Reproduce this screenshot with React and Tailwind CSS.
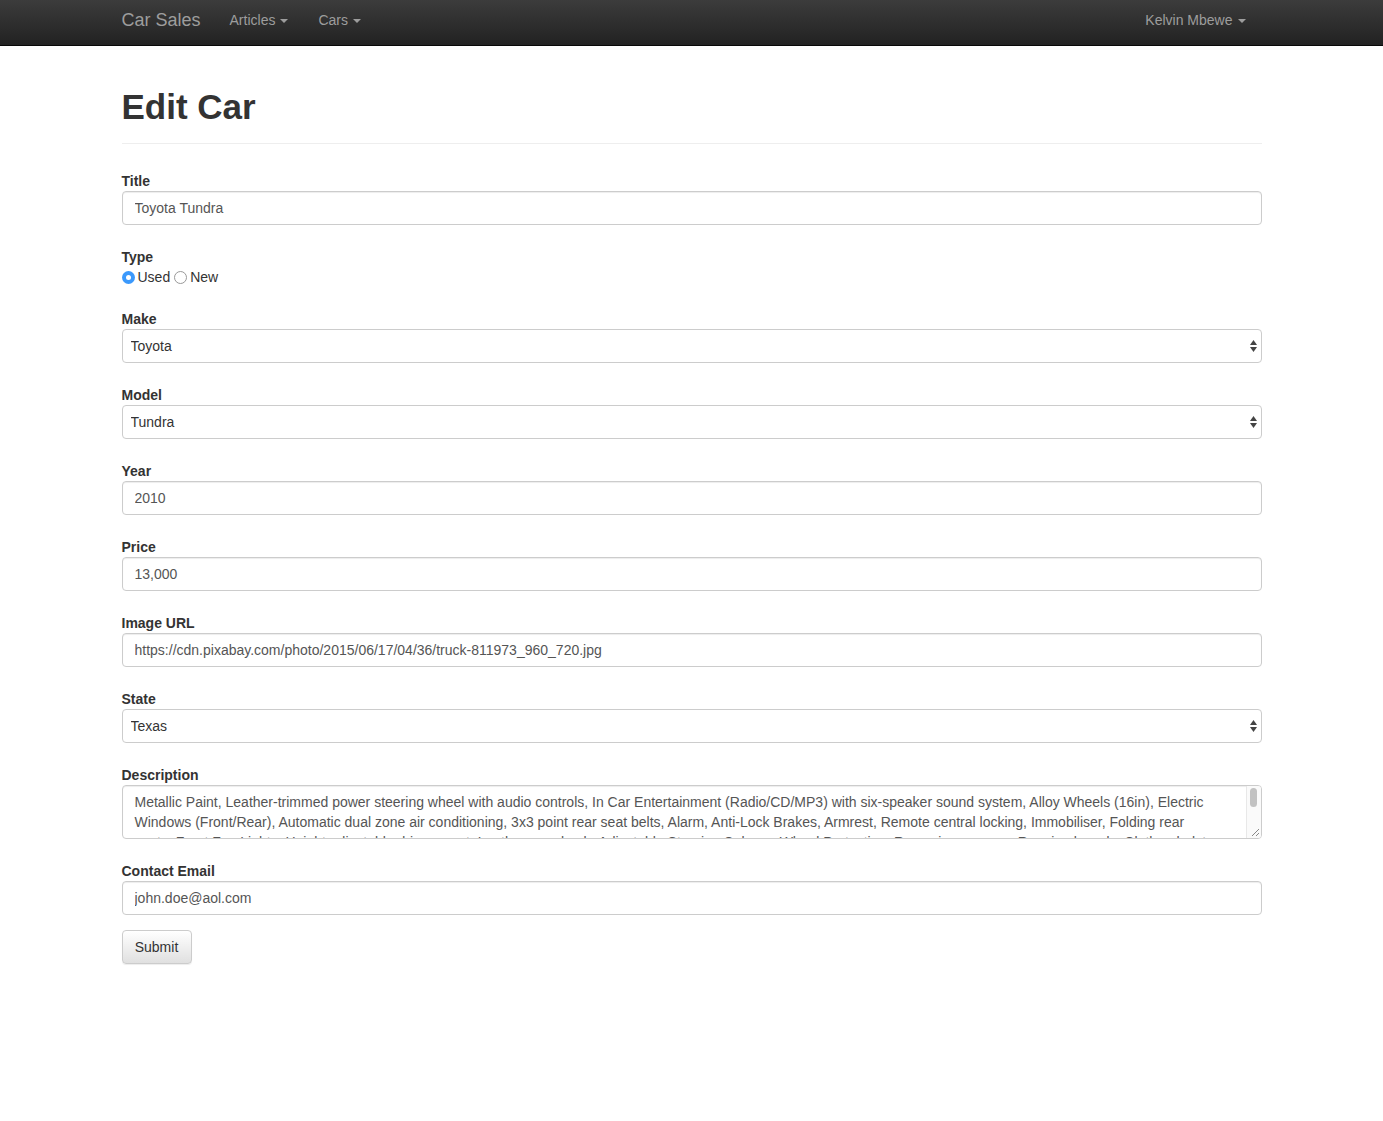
import React from "react";

const font = { fontFamily: '"Liberation Sans", Arial, sans-serif' };

/**
 * Caret - 下拉小三角
 */
function Caret() {
  return (
    <span className="ml-[5px] inline-block h-0 w-0 border-l-[4px] border-r-[4px] border-t-[4px] border-l-transparent border-r-transparent border-t-[#9d9d9d] align-middle"></span>
  );
}

function Navbar() {
  return (
    <div className="h-[46px] border-b border-[#080808] bg-gradient-to-b from-[#3c3c3c] to-[#222222]">
      <div className="mx-auto flex w-[1140px] items-start justify-between pt-[9px]">
        <div className="flex items-center">
          <span className="text-[18px] leading-[22px] text-[#9d9d9d]">Car Sales</span>
          <span className="ml-[29px] text-[14px] leading-[22px] text-[#9d9d9d]">
            Articles
            <Caret />
          </span>
          <span className="ml-[30px] text-[14px] leading-[22px] text-[#9d9d9d]">
            Cars
            <Caret />
          </span>
        </div>
        <span className="mr-[16px] text-[14px] leading-[22px] text-[#9d9d9d]">
          Kelvin Mbewe
          <Caret />
        </span>
      </div>
    </div>
  );
}

function Label({ children }) {
  return <label className="block text-[14px] font-bold leading-[20px] text-[#333]">{children}</label>;
}

function TextInput({ value }) {
  return (
    <input
      readOnly
      value={value}
      className="block h-[34px] w-full rounded-[4px] border border-[#ccc] bg-white px-3 text-[14px] text-[#555] shadow-[inset_0_1px_1px_rgba(0,0,0,0.075)] outline-none"
      style={font}
    />
  );
}

function SelectInput({ value }) {
  return (
    <div className="relative">
      <select
        value={value}
        onChange={() => {}}
        className="block h-[34px] w-full appearance-none rounded-[4px] border border-[#ccc] bg-white pl-[8px] text-[14px] text-[#333] outline-none"
        style={font}
      >
        <option>{value}</option>
      </select>
      {/* up/down arrows */}
      <svg className="pointer-events-none absolute right-[5px] top-[11px]" width="7" height="12" viewBox="0 0 7 12">
        <path d="M3.5 0 L7 5 L0 5 Z" fill="#444" />
        <path d="M3.5 12 L7 7 L0 7 Z" fill="#444" />
      </svg>
    </div>
  );
}

function Group({ label, children, mb = "mb-[22px]" }) {
  return (
    <div className={mb}>
      <Label>{label}</Label>
      {children}
    </div>
  );
}

export default function App() {
  return (
    <div className="min-h-[1121px] bg-white" style={font}>
      <Navbar />
      <div className="mx-auto w-[1140px] pt-[41px]">
        {/* Page Header */}
        <h1 className="border-b border-[#eee] pb-[16px] text-[35px] font-bold leading-[40px] text-[#333]">Edit Car</h1>

        <form className="mt-[27px]">
          <Group label="Title">
            <TextInput value="Toyota Tundra" />
          </Group>

          <Group label="Type">
            <div className="flex h-[20px] items-center text-[14px] text-[#333]">
              <span className="flex h-[13px] w-[13px] items-center justify-center rounded-full bg-[#3b99fc]">
                <span className="h-[5px] w-[5px] rounded-full bg-white"></span>
              </span>
              <span className="ml-[3px]">Used</span>
              <span className="ml-[4px] h-[13px] w-[13px] rounded-full border border-[#999] bg-white"></span>
              <span className="ml-[3px]">New</span>
            </div>
          </Group>

          <Group label="Make">
            <SelectInput value="Toyota" />
          </Group>

          <Group label="Model">
            <SelectInput value="Tundra" />
          </Group>

          <Group label="Year">
            <TextInput value="2010" />
          </Group>

          <Group label="Price">
            <TextInput value="13,000" />
          </Group>

          <Group label="Image URL">
            <TextInput value="https://cdn.pixabay.com/photo/2015/06/17/04/36/truck-811973_960_720.jpg" />
          </Group>

          <Group label="State">
            <SelectInput value="Texas" />
          </Group>

          <Group label="Description">
            <div className="relative h-[54px] overflow-hidden rounded-[4px] border border-[#ccc] bg-white px-3 pt-[6px] text-[14px] leading-[20px] text-[#555] shadow-[inset_0_1px_1px_rgba(0,0,0,0.075)]">
              <div className="whitespace-nowrap">
                Metallic Paint, Leather-trimmed power steering wheel with audio controls, In Car Entertainment (Radio/CD/MP3) with six-speaker sound system, Alloy Wheels (16in), Electric
              </div>
              <div className="whitespace-nowrap">
                Windows (Front/Rear), Automatic dual zone air conditioning, 3x3 point rear seat belts, Alarm, Anti-Lock Brakes, Armrest, Remote central locking, Immobiliser, Folding rear
              </div>
              <div className="whitespace-nowrap">
                seats, Front Fog Lights, Height adjustable drivers seat, Leather gear knob, Adjustable Steering Column, Wheel Protection, Reversing sensors, Running boards, Cloth upholstery
              </div>
              {/* scrollbar */}
              <div className="absolute right-0 top-0 h-full w-[15px] border-l border-[#e8e8e8] bg-[#fafafa]">
                <div className="ml-[3px] mt-[2px] h-[19px] w-[7px] rounded-full bg-[#c2c2c2]"></div>
              </div>
              {/* resize handle */}
              <svg className="absolute bottom-[1px] right-[1px]" width="9" height="9" viewBox="0 0 9 9">
                <path d="M1 8 L8 1 M5 8 L8 5" stroke="#888" strokeWidth="1" />
              </svg>
            </div>
          </Group>

          <Group label="Contact Email" mb="mb-[15px]">
            <TextInput value="john.doe@aol.com" />
          </Group>

          <button
            type="button"
            className="h-[34px] w-[70px] rounded-[4px] border border-[#ccc] bg-gradient-to-b from-white to-[#e0e0e0] text-[14px] text-[#333] shadow-[inset_0_1px_0_rgba(255,255,255,0.15),0_1px_1px_rgba(0,0,0,0.075)]"
            style={font}
          >
            Submit
          </button>
        </form>
      </div>
    </div>
  );
}
